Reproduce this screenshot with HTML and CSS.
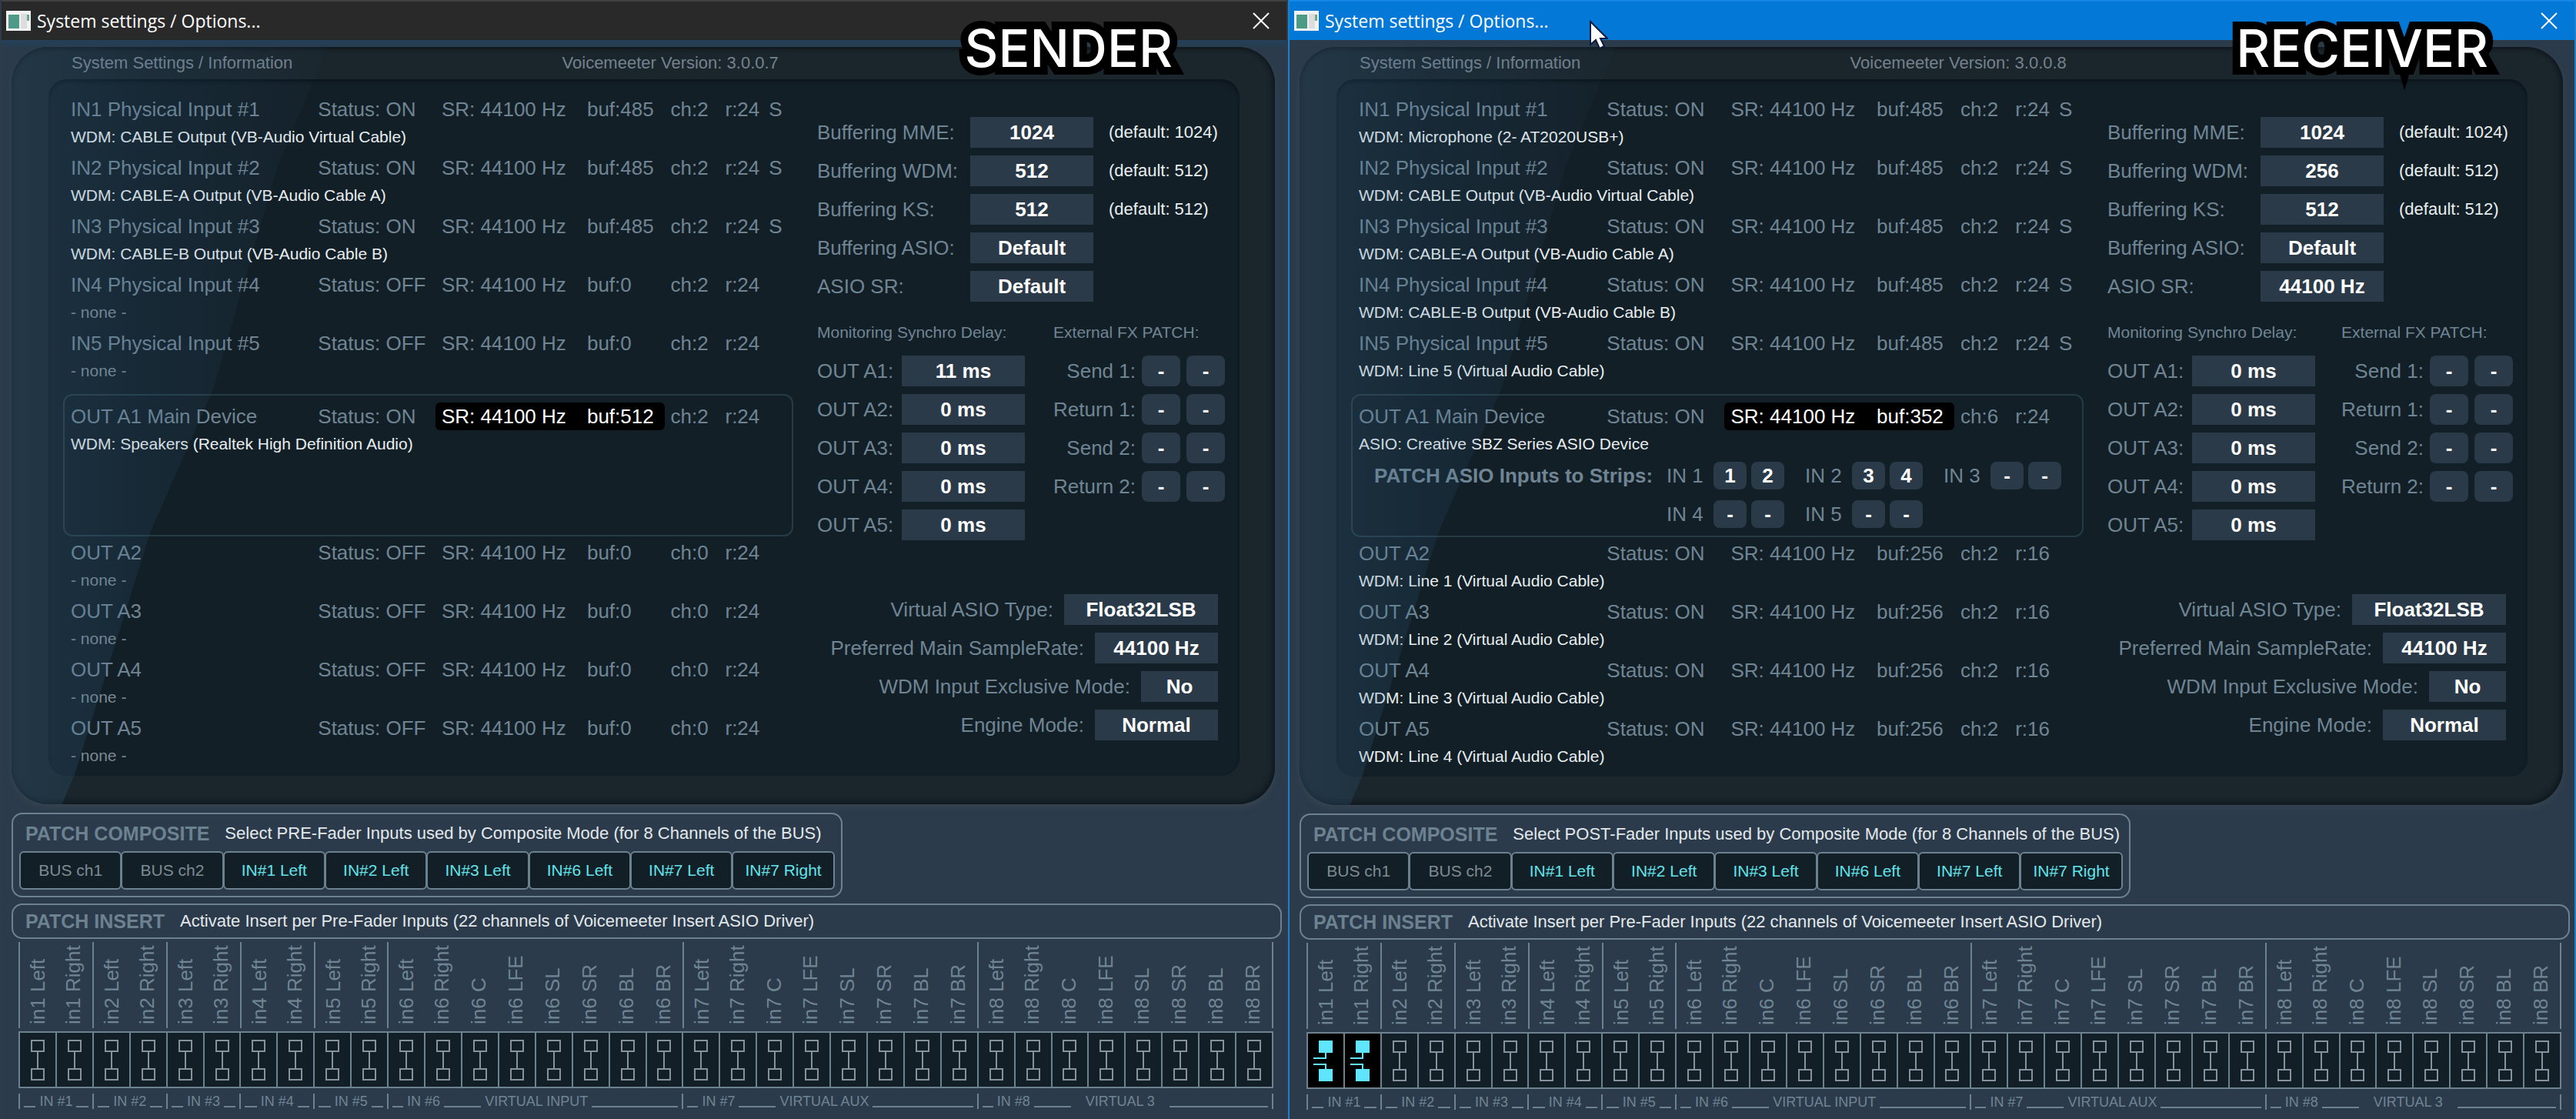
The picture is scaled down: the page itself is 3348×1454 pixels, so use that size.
FILE: index.html
```
<!DOCTYPE html>
<html lang="en">
<head>
    <meta charset="UTF-8">
    <meta name="viewport" content="width=device-width, initial-scale=1.0">
    <title>System settings / Options...</title>
    <link rel="stylesheet" href="styles.css">
</head>
<body>
    <!-- SENDER -->
    <section class="window" id="sender">
        <header class="titlebar">
            <svg class="app-icon" viewBox="0 0 32 26" aria-hidden="true">
                <rect width="32" height="26" fill="#f2f2f2"/>
                <rect x="3" y="5" width="14" height="18" fill="#4d9a86"/>
                <rect x="19" y="4" width="8" height="19" fill="#dcdcdc"/>
                <rect x="27" y="5" width="3" height="8" fill="#6fa58c"/>
            </svg>
            <h1>System settings / Options...</h1>
            <button class="close" aria-label="Close">
                <svg viewBox="0 0 22 22"><path d="M1 1L21 21M21 1L1 21"/></svg>
            </button>
        </header>
        <div class="tag">SENDER</div>
        <main class="content"></main>
    </section>

    <!-- RECEIVER -->
    <section class="window active" id="receiver">
        <header class="titlebar">
            <svg class="app-icon" viewBox="0 0 32 26" aria-hidden="true">
                <rect width="32" height="26" fill="#f2f2f2"/>
                <rect x="3" y="5" width="14" height="18" fill="#4d9a86"/>
                <rect x="19" y="4" width="8" height="19" fill="#dcdcdc"/>
                <rect x="27" y="5" width="3" height="8" fill="#6fa58c"/>
            </svg>
            <h1>System settings / Options...</h1>
            <button class="close" aria-label="Close">
                <svg viewBox="0 0 22 22"><path d="M1 1L21 21M21 1L1 21"/></svg>
            </button>
        </header>
        <div class="tag">RECEIVER</div>
        <main class="content"></main>
        <svg class="cursor" viewBox="0 0 24 38" aria-hidden="true">
            <path d="M1 2V32L8 26L13 37L19 34L14 24H23Z" fill="#fff" stroke="#0b1c3c" stroke-width="2"/>
        </svg>
    </section>

    <script src="script.js"></script>
</body>
</html>
```
FILE: styles.css
```
* {
    box-sizing: border-box;
}

body {
    margin: 0;
    min-height: 100vh;
    display: grid;
    grid-template-columns: 1fr 1fr;
    font-family: "Liberation Sans", Arial, sans-serif;
    font-size: 26px;
    color: #708594;
    background-color: #2b3b4a;
}

button {
    font-family: inherit;
    padding: 0;
    border: none;
    cursor: pointer;
}

/* WINDOW */
.window {
    position: relative;
    border: 2px solid #2d3c4a;
    border-top: none;
    background-color: #2b3b4b;
}

.window.active {
    border-color: #1f7fc8;
}

.titlebar {
    display: flex;
    align-items: center;
    height: 52px;
    padding: 0 22px 0 6px;
    background-color: #292929;
    border-top: 2px solid #414141;
    color: #fff;
}

.active .titlebar {
    background-color: #0378d7;
    border-top-color: #1687e6;
}

.app-icon {
    width: 32px;
    height: 26px;
    margin-right: 8px;
}

.titlebar h1 {
    flex: 1;
    margin: 0;
    font-family: "Open Sans", "Noto Sans", sans-serif;
    font-size: 23px;
    font-weight: normal;
}

.close {
    width: 22px;
    height: 22px;
    background: none;
}

.close svg {
    display: block;
    stroke: #fff;
    stroke-width: 2;
}

.tag {
    position: absolute;
    top: 22px;
    right: 148px;
    z-index: 2;
    font-family: Inter, sans-serif;
    font-size: 68px;
    font-weight: 500;
    line-height: 80px;
    color: #fff;
    -webkit-text-stroke: 20px #000;
    paint-order: stroke fill;
    stroke-linejoin: round;
}

.active .tag {
    right: 112px;
}

.cursor {
    position: absolute;
    top: 26px;
    left: 390px;
    width: 24px;
    height: 38px;
}

.content {
    padding: 9px 6px 12px 13px;
}

#sender .content {
    background: linear-gradient(#23415a, #2b3b4b 12px);
}

/* MAIN PANEL */
.panel {
    position: relative;
    margin-right: 9px;
    padding: 0 46px 37px 48px;
    border-radius: 48px;
    overflow: hidden;
    background-color: #1a252c;
    box-shadow: inset 0 3px 4px #12191f, inset -3px -4px 6px #111a20, 0 4px 8px #384550;
}

/* light reflection on the left side */
.panel::after {
    content: "";
    position: absolute;
    inset: 0;
    pointer-events: none;
    background: linear-gradient(to right, rgba(62, 112, 152, 0.24), rgba(50, 105, 150, 0.14) 10%, rgba(50, 105, 140, 0.03) 25%);
    clip-path: polygon(0 0, 25% 0, 24% 4%, 21% 16%, 16% 45%, 11% 64%, 8% 80%, 5% 96%, 4% 100%, 0 100%);
}

.panel-head {
    display: flex;
    align-items: center;
    height: 42px;
    padding-left: 30px;
    font-size: 22px;
    color: #74828c;
}

.panel-head span:first-child {
    width: 42%;
}

.settings {
    display: grid;
    grid-template-columns: 949fr 530fr;
    column-gap: 31px;
    padding: 21px 19px 4px;
    border-radius: 24px;
    background-color: #131f27;
    box-shadow: inset 0 3px 4px #0a141b;
}

/* DEVICES */
.devices {
    width: 100%;
    table-layout: fixed;
    border-collapse: collapse;
}

.device-group {
    padding: 0 2px;
}

.devices td,
.devices th {
    height: 36px;
    padding: 0 0 0 8px;
    text-align: left;
    font-weight: normal;
    line-height: 30px;
    white-space: nowrap;
}

.devices .device td {
    height: 40px;
    padding-bottom: 4px;
    font-size: 21px;
    color: #e8eef0;
}

.devices .device.none td {
    color: #7b8993;
}

.c-name { width: 34%; }
.c-status { width: 17%; }
.c-sr { width: 20%; }
.c-buf { width: 11.5%; }
.c-ch { width: 7.5%; }
.c-r { width: 6%; }
.c-s { width: 4%; }

.devices .hot {
    color: #fff;
    background-color: #000;
}

.devices .hot-start { border-radius: 6px 0 0 6px; }
.devices .hot-end { border-radius: 0 6px 6px 0; }

.main-device {
    min-height: 185px;
    margin: 8px 0 3px;
    padding: 9px 0 10px;
    border: 2px solid #263b46;
    border-radius: 12px;
}

.asio-patch {
    display: grid;
    grid-template-columns: 380px repeat(3, 180px);
    row-gap: 14px;
    padding: 1px 0 0 28px;
    white-space: nowrap;
}

.asio-patch b {
    line-height: 36px;
}

.strip {
    display: flex;
    align-items: center;
    gap: 6px;
}

.strip span {
    width: 55px;
}

.strip:nth-child(5) {
    grid-column: 2;
}

.strip .slot {
    width: 43px;
    height: 36px;
}

/* VALUES */
.value,
.slot {
    height: 40px;
    font-size: 26px;
    font-weight: bold;
    color: #fff;
    background-color: #2b3a48;
}

.slot {
    width: 50px;
    border-radius: 8px;
}

.value { width: 160px; }
.value.wide { width: 200px; }
.value.narrow { width: 100px; }

.options {
    padding-top: 28px;
    white-space: nowrap;
}

.row {
    display: flex;
    align-items: center;
    height: 40px;
    margin-bottom: 10px;
}

.buffering label {
    width: 199px;
}

.buffering .default {
    margin-left: 20px;
    font-size: 22px;
    color: #e8eef0;
}

.delays {
    display: flex;
    justify-content: space-between;
    padding-top: 10px;
}

.delays h2 {
    margin: 0 0 10px;
    font-size: 21px;
    font-weight: normal;
    line-height: 40px;
}

.sync label {
    width: 110px;
}

.fx .row {
    justify-content: flex-end;
    gap: 8px;
}

.engine {
    padding: 60px 9px 0 0;
}

.engine .row {
    justify-content: flex-end;
    gap: 14px;
}

/* PATCH COMPOSITE */
.box {
    border: 2px solid #6d8290;
    border-radius: 14px;
}

.box-head {
    display: flex;
    align-items: center;
    gap: 20px;
    padding-left: 16px;
    font-size: 22px;
    line-height: 42px;
    color: #e3e8eb;
    white-space: nowrap;
}

.box-head h2 {
    margin: 0;
    font-size: 25px;
    color: #6d8290;
}

.composite {
    width: 65.4%;
    margin-top: 11px;
    padding: 4px 9px 8px 8px;
}

.composite .box-head {
    padding-left: 8px;
    padding-bottom: 2px;
}

.composite-buttons {
    display: grid;
    grid-template-columns: repeat(8, 1fr);
}

.composite-buttons button {
    height: 50px;
    margin-right: -1px;
    border: 2px solid #6d8290;
    border-radius: 6px;
    font-size: 21px;
    color: #7f8b92;
    background-color: #131f27;
}

.composite-buttons .on {
    color: #62e3ea;
}

/* PATCH INSERT */
.insert {
    margin-top: 8px;
}

.strip-labels,
.strip-cells,
.strip-groups {
    display: grid;
    grid-template-columns: repeat(34, 1fr);
    margin: 0 11px 0 9px;
}

.strip-labels {
    margin-top: 4px;
    border-right: 2px solid #6d8290;
}

.strip-labels span {
    height: 112px;
    padding-top: 5px;
    writing-mode: vertical-rl;
    transform: rotate(180deg);
    line-height: 46px;
    white-space: nowrap;
}

.strip-labels .first {
    border-right: 2px solid #6d8290;
}

.strip-cells {
    margin-top: 4px;
    border: solid #6d8290;
    border-width: 2px 2px 2px 0;
}

.strip-cells button {
    display: flex;
    justify-content: center;
    align-items: center;
    height: 70px;
    border-left: 2px solid #6d8290;
    background-color: #131f27;
}

.strip-cells svg {
    width: 36px;
    height: 56px;
    fill: none;
    stroke: #84939d;
    stroke-width: 2;
}

.strip-cells .on {
    background-color: #000;
}

.strip-cells .on svg {
    stroke: #5fe6fc;
}

.strip-cells .on rect {
    fill: #5fe6fc;
}

.strip-groups {
    margin-top: 7px;
    border-right: 2px solid #6d8290;
    font-size: 18px;
    line-height: 20px;
    white-space: nowrap;
}

.group {
    display: flex;
    gap: 5px;
    padding: 0 5px;
    height: 20px;
    border-left: 2px solid #6d8290;
}

.group i {
    flex: 1;
    height: 18px;
    border-bottom: 2px solid #6d8290;
}

.group.stereo { grid-column: span 2; }
.group.multi { grid-column: span 8; }
.group.multi i:first-child { flex: 0 0 14px; }
.group.multi i:nth-child(3) { flex: 0 0 48px; }
.group.multi:last-child span:nth-child(4) { padding: 0 14px; }
```
FILE: script.js
```
const settings = {
    sender: {
        version: '3.0.0.7',
        inputs: [
            ['ON', '485', '2', '24', 'S', 'WDM: CABLE Output (VB-Audio Virtual Cable)'],
            ['ON', '485', '2', '24', 'S', 'WDM: CABLE-A Output (VB-Audio Cable A)'],
            ['ON', '485', '2', '24', 'S', 'WDM: CABLE-B Output (VB-Audio Cable B)'],
            ['OFF', '0', '2', '24', '', '- none -'],
            ['OFF', '0', '2', '24', '', '- none -']
        ],
        main: ['ON', '512', '2', '24', '', 'WDM: Speakers (Realtek High Definition Audio)'],
        outputs: [
            ['OFF', '0', '0', '24', '', '- none -'],
            ['OFF', '0', '0', '24', '', '- none -'],
            ['OFF', '0', '0', '24', '', '- none -'],
            ['OFF', '0', '0', '24', '', '- none -']
        ],
        strips: null,
        buffering: ['1024', '512', '512', 'Default', 'Default'],
        delays: ['11 ms', '0 ms', '0 ms', '0 ms', '0 ms'],
        fader: 'PRE',
        inserts: []
    },
    receiver: {
        version: '3.0.0.8',
        inputs: [
            ['ON', '485', '2', '24', 'S', 'WDM: Microphone (2- AT2020USB+)'],
            ['ON', '485', '2', '24', 'S', 'WDM: CABLE Output (VB-Audio Virtual Cable)'],
            ['ON', '485', '2', '24', 'S', 'WDM: CABLE-A Output (VB-Audio Cable A)'],
            ['ON', '485', '2', '24', 'S', 'WDM: CABLE-B Output (VB-Audio Cable B)'],
            ['ON', '485', '2', '24', 'S', 'WDM: Line 5 (Virtual Audio Cable)']
        ],
        main: ['ON', '352', '6', '24', '', 'ASIO: Creative SBZ Series ASIO Device'],
        outputs: [
            ['ON', '256', '2', '16', '', 'WDM: Line 1 (Virtual Audio Cable)'],
            ['ON', '256', '2', '16', '', 'WDM: Line 2 (Virtual Audio Cable)'],
            ['ON', '256', '2', '16', '', 'WDM: Line 3 (Virtual Audio Cable)'],
            ['ON', '256', '2', '16', '', 'WDM: Line 4 (Virtual Audio Cable)']
        ],
        strips: [['1', '2'], ['3', '4'], ['-', '-'], ['-', '-'], ['-', '-']],
        buffering: ['1024', '256', '512', 'Default', '44100 Hz'],
        delays: ['0 ms', '0 ms', '0 ms', '0 ms', '0 ms'],
        fader: 'POST',
        inserts: [0, 1]
    }
};

const composite = ['BUS ch1', 'BUS ch2', 'IN#1 Left', 'IN#2 Left', 'IN#3 Left', 'IN#6 Left', 'IN#7 Left', 'IN#7 Right'];
const surround = ['Left', 'Right', 'C', 'LFE', 'SL', 'SR', 'BL', 'BR'];

// Device rows: one line of figures, one line with the device name
function deviceRows(name, d, hot) {
    const h = hot ? 'hot' : '';
    return `
        <tr>
            <th scope="row">${name}</th>
            <td>Status: ${d[0]}</td>
            <td class="${h} ${h && 'hot-start'}">SR: 44100 Hz</td>
            <td class="${h} ${h && 'hot-end'}">buf:${d[1]}</td>
            <td>ch:${d[2]}</td>
            <td>r:${d[3]}</td>
            <td>${d[4]}</td>
        </tr>
        <tr class="device ${d[5] === '- none -' ? 'none' : ''}"><td colspan="7">${d[5]}</td></tr>`;
}

function deviceTable(rows) {
    const cols = ['name', 'status', 'sr', 'buf', 'ch', 'r', 's'].map(c => `<col class="c-${c}">`).join('');
    return `<table class="devices"><colgroup>${cols}</colgroup><tbody>${rows}</tbody></table>`;
}

function asioPatch(strips) {
    if (!strips) return '';
    return `<div class="asio-patch"><b>PATCH ASIO Inputs to Strips:</b>${strips.map((s, i) => `
        <div class="strip"><span>IN ${i + 1}</span><button class="slot">${s[0]}</button><button class="slot">${s[1]}</button></div>`).join('')}</div>`;
}

function valueRow(id, label, value, size = '', note = '') {
    return `<div class="row"><label for="${id}">${label}</label><button class="value ${size}" id="${id}">${value}</button>${note}</div>`;
}

function options(id, s) {
    const defaults = ['1024', '512', '512'];
    const buffering = ['Buffering MME:', 'Buffering WDM:', 'Buffering KS:', 'Buffering ASIO:', 'ASIO SR:'].map((label, i) =>
        valueRow(`${id}-buf${i}`, label, s.buffering[i], '', defaults[i] ? `<span class="default">(default: ${defaults[i]})</span>` : '')).join('');
    const sync = s.delays.map((d, i) => valueRow(`${id}-delay${i}`, `OUT A${i + 1}:`, d)).join('');
    const fx = ['Send 1:', 'Return 1:', 'Send 2:', 'Return 2:'].map((label, i) => `
        <div class="row"><label for="${id}-fx${i}">${label}</label><button class="slot" id="${id}-fx${i}">-</button><button class="slot">-</button></div>`).join('');

    return `
        <div class="options">
            <div class="buffering">${buffering}</div>
            <div class="delays">
                <div class="sync"><h2>Monitoring Synchro Delay:</h2>${sync}</div>
                <div class="fx"><h2>External FX PATCH:</h2>${fx}</div>
            </div>
            <div class="engine">
                ${valueRow(id + '-type', 'Virtual ASIO Type:', 'Float32LSB', 'wide')}
                ${valueRow(id + '-rate', 'Preferred Main SampleRate:', '44100 Hz')}
                ${valueRow(id + '-excl', 'WDM Input Exclusive Mode:', 'No', 'narrow')}
                ${valueRow(id + '-mode', 'Engine Mode:', 'Normal')}
            </div>
        </div>`;
}

// The 34 insert points: in1-in5 are stereo, in6-in8 have 8 channels
function insertStrips(s) {
    const names = [];
    for (let n = 1; n <= 8; n++) {
        surround.slice(0, n < 6 ? 2 : 8).forEach(ch => names.push(`in${n} ${ch}`));
    }
    const off = '<svg viewBox="0 0 36 56"><rect x="10" y="3" width="16" height="14"/><rect x="10" y="40" width="16" height="14"/><path d="M18 17V40"/></svg>';
    const on = '<svg viewBox="0 0 36 56"><rect x="10" y="3" width="16" height="14"/><rect x="10" y="40" width="16" height="14"/><path d="M18 17V25H2M2 33H18V40"/></svg>';
    const virtual = { 6: 'VIRTUAL INPUT', 7: 'VIRTUAL AUX', 8: 'VIRTUAL 3' };

    const labels = names.map(n => `<span class="${n.endsWith(' Left') ? 'first' : ''}">${n}</span>`).join('');
    const cells = names.map((n, i) => {
        const active = s.inserts.includes(i);
        return `<button class="${active ? 'on' : ''}" aria-label="${n}">${active ? on : off}</button>`;
    }).join('');
    const groups = [1, 2, 3, 4, 5, 6, 7, 8].map(n => virtual[n]
        ? `<div class="group multi"><i></i><span>IN #${n}</span><i></i><span>${virtual[n]}</span><i></i></div>`
        : `<div class="group stereo"><i></i><span>IN #${n}</span><i></i></div>`).join('');

    return `<div class="strip-labels">${labels}</div><div class="strip-cells">${cells}</div><div class="strip-groups">${groups}</div>`;
}

Object.keys(settings).forEach(id => {
    const s = settings[id];
    document.querySelector(`#${id} .content`).innerHTML = `
        <div class="panel">
            <div class="panel-head"><span>System Settings / Information</span><span>Voicemeeter Version: ${s.version}</span></div>
            <div class="settings">
                <div>
                    <div class="device-group">${deviceTable(s.inputs.map((d, i) => deviceRows(`IN${i + 1} Physical Input #${i + 1}`, d)).join(''))}</div>
                    <div class="main-device">${deviceTable(deviceRows('OUT A1 Main Device', s.main, true))}${asioPatch(s.strips)}</div>
                    <div class="device-group">${deviceTable(s.outputs.map((d, i) => deviceRows(`OUT A${i + 2}`, d)).join(''))}</div>
                </div>
                ${options(id, s)}
            </div>
        </div>
        <div class="box composite">
            <div class="box-head"><h2>PATCH COMPOSITE</h2>Select ${s.fader}-Fader Inputs used by Composite Mode (for 8 Channels of the BUS)</div>
            <div class="composite-buttons">${composite.map(c => `<button class="${c.startsWith('IN') ? 'on' : ''}">${c}</button>`).join('')}</div>
        </div>
        <div class="box insert">
            <div class="box-head"><h2>PATCH INSERT</h2>Activate Insert per Pre-Fader Inputs (22 channels of Voicemeeter Insert ASIO Driver)</div>
        </div>
        ${insertStrips(s)}`;
});
```
